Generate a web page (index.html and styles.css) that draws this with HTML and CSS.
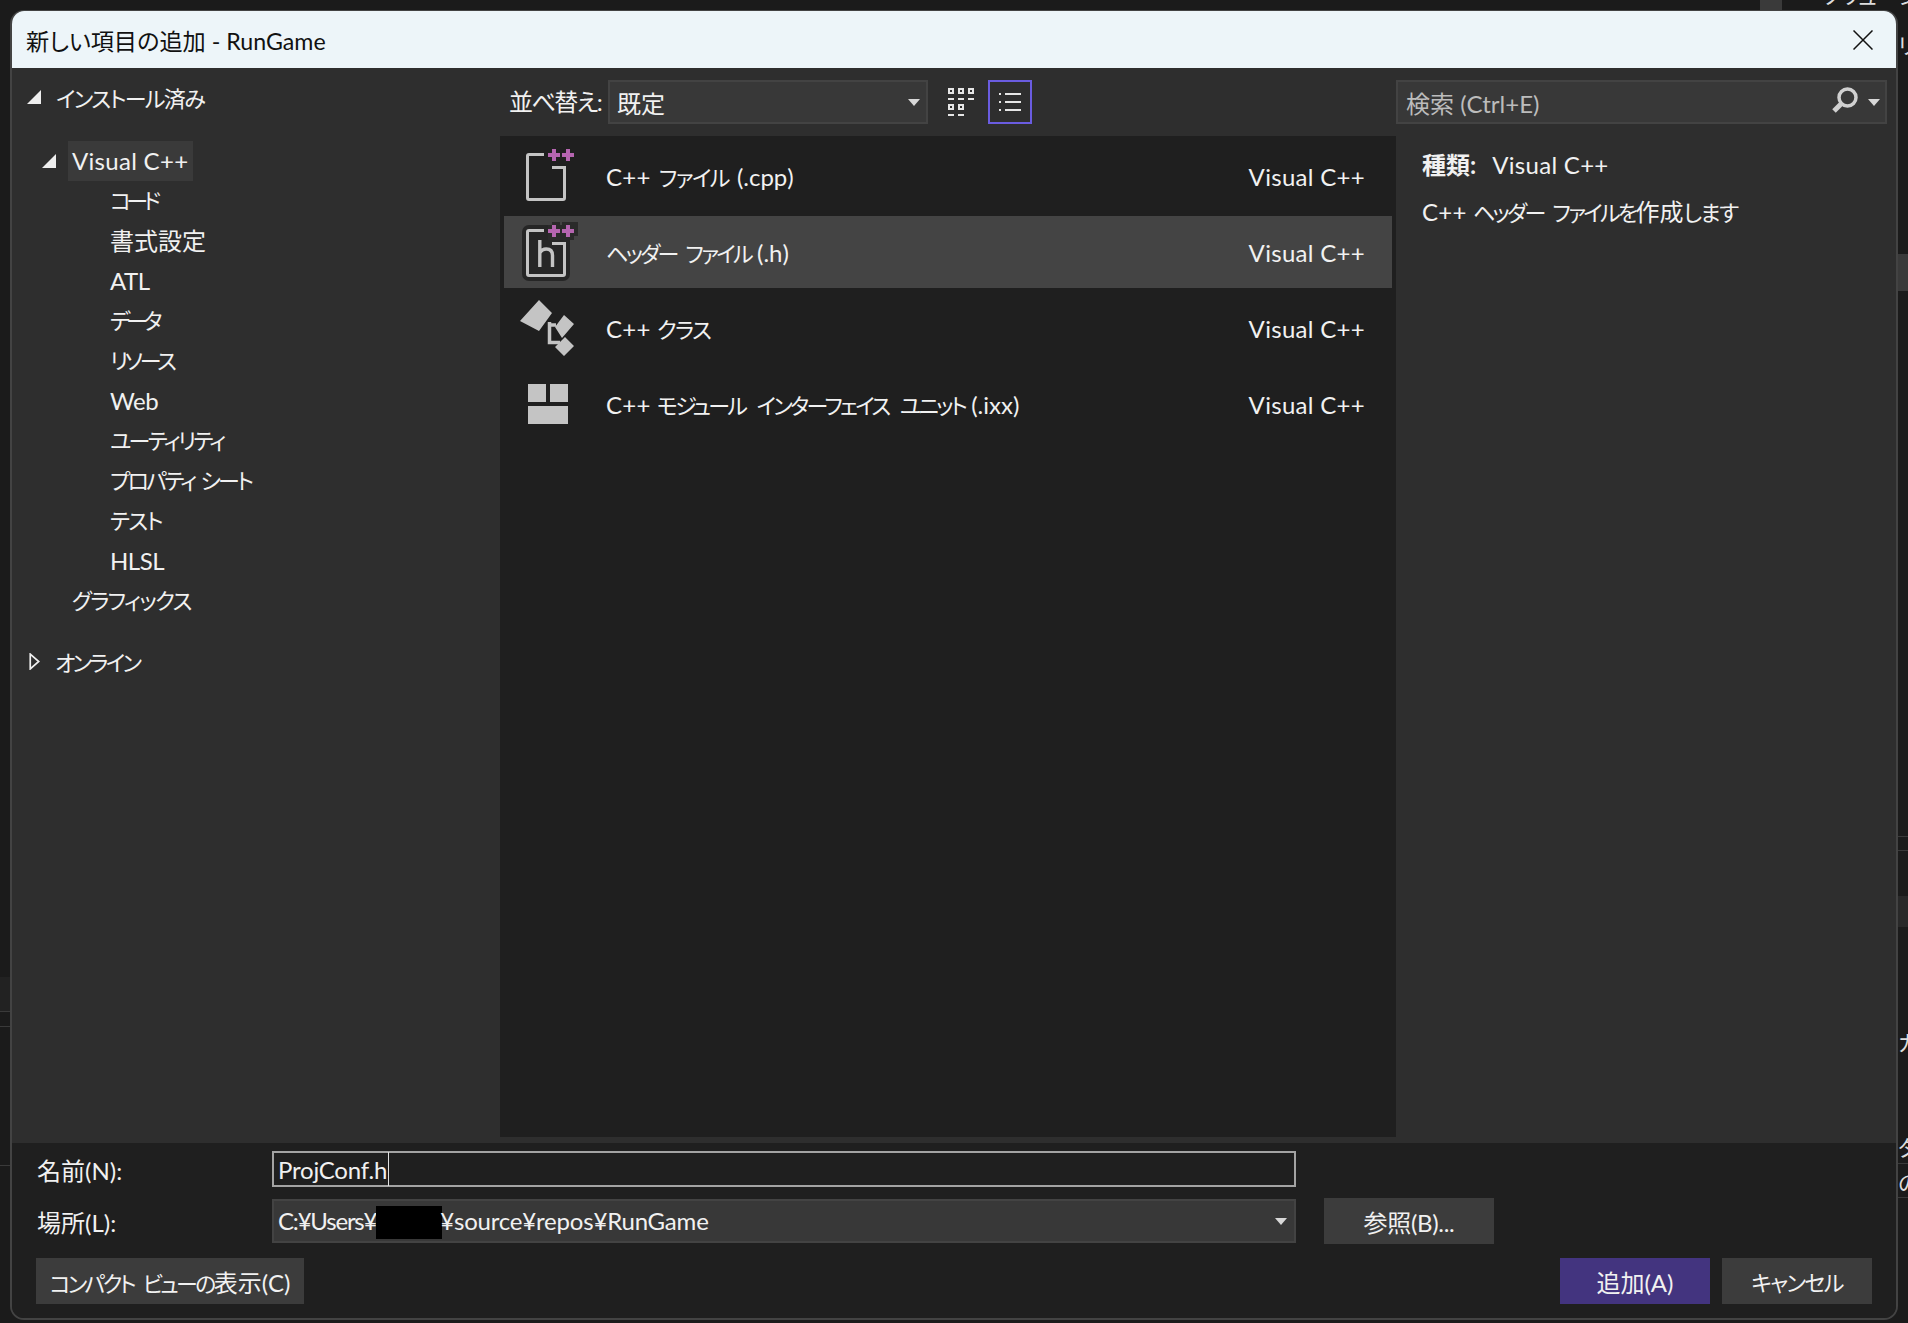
FILE: index.html
```html
<!DOCTYPE html>
<html lang="ja">
<head>
<meta charset="utf-8">
<title>新しい項目の追加 - RunGame</title>
<link rel="stylesheet" href="styles.css">
</head>
<body>
<div class="backdrop">
  <span class="bg-bit bit-top">ソリューション</span>
  <span class="bg-bit bit-r1">リ</span>
  <span class="bg-bit bit-r5">ー</span>
  <span class="bg-bit bit-r2">ガ</span>
  <span class="bg-bit bit-r3">タ</span>
  <span class="bg-bit bit-r4">の</span>
  <span class="bg-block bit-block1"></span>
  <span class="bg-block bit-block2"></span>
  <span class="bg-block bit-block3"></span>
  <span class="bg-block bit-block4"></span>
  <span class="bg-line bit-line1"></span>
  <span class="bg-line bit-line2"></span>
  <span class="bg-line bit-line3"></span>
  <span class="bg-line bit-line4"></span>
  <span class="bg-line bit-line5"></span>
  <span class="bg-line bit-line6"></span>
  <span class="bg-line bit-line7"></span>
</div>
<main class="dialog">
  <header class="titlebar">
    <span>新しい項目の追加 - RunGame</span>
    <svg class="close" viewBox="0 0 20 20"><path d="M0.5 0.5L19.5 19.5M19.5 0.5L0.500 19.5" stroke="#111" stroke-width="1.5" fill="none"/></svg>
  </header>
  <div class="content">
    <nav class="tree">
      <div class="tree-head"><i class="tri tri-open"></i><span class="k2">インストール済み</span></div>
      <div class="tree-sel-row"><i class="tri tri-open"></i><span class="tree-sel plus">Visual C++</span></div>
      <ul class="tree-children">
        <li class="k5">コード</li><li>書式設定</li><li class="lat">ATL</li><li class="k5">データ</li><li class="k4">リソース</li><li class="lat">Web</li><li class="k3">ユーティリティ</li><li class="k3 sp-narrow">プロパティ シート</li><li class="k2">テスト</li><li class="lat">HLSL</li>
      </ul>
      <div class="tree-gfx k2">グラフィックス</div>
      <div class="tree-online"><svg class="tri-closed" viewBox="0 0 10 16"><path d="M1 1L9 8L1 15Z" fill="none" stroke="#f0f0f0" stroke-width="1.6"/></svg><span class="k3">オンライン</span></div>
    </nav>
    <section class="center">
      <div class="toolbar">
        <span class="sort-label t1">並べ替え:</span>
        <div class="combo sort-combo"><span>既定</span><i class="caret"></i></div>
        <button class="view-btn" aria-label="grid">
          <svg viewBox="948 88 26 28" width="26" height="28" fill="#e6e6e6">
            <path fill-rule="evenodd" d="M948 88h6v6h-6zM950 90v2h2v-2zM958 88h6v6h-6zM960 90v2h2v-2zM968 88h6v6h-6zM970 90v2h2v-2zM948 104h6v6h-6zM950 106v2h2v-2zM958 104h6v6h-6zM960 106v2h2v-2z"/>
            <path d="M948 98h6v2h-6zM958 98h6v2h-6zM968 98h6v2h-6zM948 114h6v2h-6zM958 114h6v2h-6z"/>
          </svg>
        </button>
        <button class="view-btn view-on" aria-label="list">
          <svg viewBox="998 92 22 18" width="22" height="18" fill="#e6e6e6">
            <path d="M998 92h2v2h-2zM1004 92h16v2h-16zM998 100h2v2h-2zM1004 100h16v2h-16zM998 108h2v2h-2zM1004 108h16v2h-16z"/>
          </svg>
        </button>
      </div>
      <div class="list">
        <div class="row">
          <svg class="ico" viewBox="520 146 60 60"><path d="M544 154.500H529a1.500 1.500 0 0 0-1.500 1.500V198a1.500 1.500 0 0 0 1.500 1.500H563a1.500 1.500 0 0 0 1.500-1.500V167.500H552" fill="none" stroke="#c4c4c4" stroke-width="3"/><path d="M548 153h4v-4h4v4h4v4h-4v4h-4v-4h-4zM562 153h4v-4h4v4h4v4h-4v4h-4v-4h-4z" fill="#b565b0"/></svg>
          <span class="row-name wide"><span class="plus">C++</span> <span class="k2">ファイル</span> (.cpp)</span><span class="row-kind plus">Visual C++</span>
        </div>
        <div class="row row-sel">
          <svg class="ico" viewBox="520 222 60 60"><rect x="522" y="225" width="48" height="56" rx="7" fill="#262626"/><path d="M548 225h4v-4h8v4h2v-4h16v15h-4v4h-26z" fill="#2a2a2a"/><path d="M544 230.500H529a1.500 1.500 0 0 0-1.500 1.500V274a1.500 1.500 0 0 0 1.500 1.500H563a1.500 1.500 0 0 0 1.500-1.500V243.500H552" fill="none" stroke="#c4c4c4" stroke-width="3"/><path d="M539.800 240V267M539.800 253c1.500-3 4-4 6.500-4 4 0 6.200 2.300 6.200 6.500V267" fill="none" stroke="#c4c4c4" stroke-width="3.400"/><path d="M548 229h4v-4h4v4h4v4h-4v4h-4v-4h-4zM562 229h4v-4h4v4h4v4h-4v4h-4v-4h-4z" fill="#b565b0"/></svg>
          <span class="row-name"><span class="k3">ヘッダー ファイル</span> (.h)</span><span class="row-kind plus">Visual C++</span>
        </div>
        <div class="row">
          <svg class="ico" viewBox="520 298 60 60"><path d="M520 321L539 300L552 313L539 331ZM555 327L564 315L574 324L562 338ZM555 347L565 337L574 346L564 356Z" fill="#c4c4c4"/><path d="M549.500 322V342.500H560M549.500 325H556" fill="none" stroke="#c4c4c4" stroke-width="3.500"/></svg>
          <span class="row-name"><span class="plus">C++</span> <span class="k2">クラス</span></span><span class="row-kind plus">Visual C++</span>
        </div>
        <div class="row">
          <svg class="ico" viewBox="520 374 60 60"><path d="M528 384H546V402H528ZM550 384H568V402H550ZM528 406H568V424H528Z" fill="#c4c4c4"/></svg>
          <span class="row-name"><span class="plus">C++</span> <span class="k3 sp-wide">モジュール インターフェイス ユニット</span> (.ixx)</span><span class="row-kind plus">Visual C++</span>
        </div>
      </div>
    </section>
    <aside class="side">
      <div class="search"><span>検索 (Ctrl+E)</span>
        <svg class="search-ico" viewBox="1832 86 26 30"><circle cx="1847.500" cy="98.500" r="8.500" fill="none" stroke="#d0d0d0" stroke-width="3.500"/><path d="M1841 105L1834 112" stroke="#d0d0d0" stroke-width="5"/></svg>
        <i class="caret"></i>
      </div>
      <div class="info">
        <p class="info-kind"><b>種類:</b><span class="plus">Visual C++</span></p>
        <p class="info-desc"><span class="plus">C++</span> <span class="k3">ヘッダー ファイルを</span>作成<span class="k2">します</span></p>
      </div>
    </aside>
  </div>
  <footer class="footer">
    <div class="field-row">
      <label class="field-label">名前(N):</label>
      <div class="name-input"><span class="name-text">ProjConf.h</span><i class="text-caret"></i></div>
    </div>
    <div class="field-row loc-row">
      <label class="field-label">場所(L):</label>
      <div class="combo loc-combo"><span class="loc-text"><span class="loc-user">C:¥Users¥</span><i class="redact"></i>¥source¥repos¥RunGame</span><i class="caret"></i></div>
      <button class="btn btn-browse">参照(B)...</button>
    </div>
    <div class="actions">
      <button class="btn btn-compact"><span class="k3">コンパクト ビューの</span>表示(C)</button>
      <button class="btn btn-main primary">追加(A)</button>
      <button class="btn btn-main"><span class="k2">キャンセル</span></button>
    </div>
  </footer>
</main>
</body>
</html>
```

FILE: styles.css
```css
* { box-sizing: border-box; }
html, body { margin: 0; height: 100%; }
body {
  width: 1908px; height: 1323px; overflow: hidden; position: relative;
  background: #1b1b1b; color: #f1f1f1;
  font-family: "Lato", "Noto Sans CJK JP", sans-serif;
  font-feature-settings: "palt";
  font-size: 24px;
}
.t1 { letter-spacing: -1px; }
.k2, .k3, .k4, .k5 { font-size: 22px; }
.k2 { letter-spacing: -1.6px; }
.k3 { letter-spacing: -2.7px; word-spacing: 6px; }
.k4 { letter-spacing: -3.2px; }
.k5 { letter-spacing: -4.5px; }
.sp-narrow { word-spacing: 3px; }
.sp-wide { word-spacing: 8.500px; }
.wide { word-spacing: 2px; }
.lat { letter-spacing: -.5px; }
.plus { letter-spacing: .3px; }

.backdrop { position: absolute; inset: 0; }
.bg-bit { position: absolute; font-size: 22px; color: #ddd; left: 1898px; white-space: nowrap; }
.bit-top { left: 1822px; top: -22px; }
.bit-r1 { top: 28px; }
.bit-r5 { top: 900px; }
.bit-r2 { top: 1025px; }
.bit-r3 { top: 1130px; }
.bit-r4 { top: 1165px; }
.bg-block { position: absolute; background: #3a3a3a; }
.bit-block1 { left: 1760px; top: 0; width: 22px; height: 10px; }
.bit-block2 { left: 1898px; top: 254px; width: 10px; height: 37px; }
.bit-block3 { left: 1898px; top: 896px; width: 10px; height: 31px; background: #292929; }
.bit-block4 { left: 0; top: 977px; width: 10px; height: 34px; background: #222; }
.bg-line { position: absolute; height: 1px; width: 10px; background: #3a3a3a; }
.bit-line1 { left: 0; top: 1011px; }
.bit-line2 { left: 0; top: 1026px; }
.bit-line3 { left: 0; top: 1165px; }
.bit-line4 { left: 1898px; top: 836px; }
.bit-line5 { left: 1898px; top: 850px; }
.bit-line6 { left: 1898px; top: 1163px; }
.bit-line7 { left: 1898px; top: 1197px; }

.dialog {
  position: absolute; left: 10px; top: 10px; width: 1888px; height: 1310px;
  display: flex; flex-direction: column;
  border: 2px solid #434343; border-top-width: 1px; border-radius: 14px;
  overflow: hidden; background: #1f1f1f;
}
.titlebar {
  height: 57px; flex: none; background: #edf5f9; color: #111;
  display: flex; align-items: center; justify-content: space-between;
  padding: 0 23px 0 14px; font-size: 23.2px;
}
.close { width: 20px; height: 20px; }

.content { flex: none; height: 1075px; background: #2e2e2e; display: flex; }

.tree { width: 488px; flex: none; padding: 13px 0 0 15px; }
.tree-head, .tree-sel-row, .tree-online { display: flex; align-items: center; }
.tree-head { height: 32px; gap: 15px; }
.tri { display: block; width: 14px; height: 14px; background: #eee; clip-path: polygon(100% 0, 100% 100%, 0 100%); }
.tree-sel-row { margin: 28px 0 0 15px; height: 40px; gap: 12px; }
.tree-sel { background: #3a3a3a; padding: 0 4px; line-height: 40px; height: 40px; width: 125px; }
.tree-children { list-style: none; margin: 0; padding: 0 0 0 83px; }
.tree-children li, .tree-gfx { height: 40px; line-height: 40px; }
.tree-gfx { margin-left: 45px; }
.tree-online { margin-top: 24px; height: 32px; gap: 15px; margin-left: 2px; }
.tri-closed { width: 11px; height: 17px; }

.center { width: 896px; flex: none; display: flex; flex-direction: column; }
.toolbar { height: 68px; flex: none; display: flex; align-items: flex-start; padding: 12px 0 0 9px; }
.sort-label { line-height: 44px; width: 99px; letter-spacing: -1.6px; }
.combo {
  display: flex; align-items: center; justify-content: space-between;
  background: #383838; border: 2px solid #434343; height: 44px; padding: 0 6px 0 7px;
}
.sort-combo { width: 320px; }
.caret { display: block; width: 0; height: 0; border: 6px solid transparent; border-top: 7px solid #d8d8d8; border-bottom: 0; }
.view-btn { width: 44px; height: 44px; background: none; border: 2px solid transparent; padding: 0; display: flex; align-items: center; justify-content: center; }
.view-btn:not(.view-on) { margin-left: 11px; }
.view-on { border-color: #6a5ce0; margin-left: 5px; }

.list { flex: 1; background: #1f1f1f; padding: 4px 4px 0; margin-bottom: 6px; }
.row { height: 72px; margin-bottom: 4px; display: flex; align-items: center; padding: 0 27px 0 16px; }
.row-sel { background: #444; }
.ico { width: 60px; height: 60px; flex: none; }
.row-name { margin-left: 26px; flex: 1; }
.side { flex: 1; position: relative; }
.search {
  position: relative; margin: 12px 9px 0 0; height: 44px; background: #383838; border: 2px solid #434343;
  display: flex; align-items: center; padding: 0 8px; color: #bcbcbc;
}
.search-ico { position: absolute; right: 27px; top: 3px; width: 26px; height: 30px; }
.search .caret { position: absolute; right: 5px; top: 17px; }
.info { padding: 24px 0 0 26px; }
.info p { margin: 0; height: 47px; line-height: 34px; }
.info-kind > span { margin-left: 16px; }

.footer { flex: 1; background: #1f1f1f; padding: 8px 0 0 24px; position: relative; }
.field-row { display: flex; align-items: center; }
.field-label { width: 236px; padding-left: 1px; }
.name-input { width: 1024px; height: 36px; border: 2px solid #a3a3a3; display: flex; align-items: center; padding-left: 4px; }
.name-text { letter-spacing: -.2px; }
.text-caret { display: block; width: 1px; height: 34px; background: #e0e0e0; margin-left: 1px; }
.loc-row { margin-top: 12px; height: 44px; }
.loc-combo { width: 1024px; height: 44px; padding: 3px 7px 0 4px; }
.loc-combo .caret { margin-top: -3px; }
.loc-text { letter-spacing: -.2px; }
.loc-user { letter-spacing: -1.2px; }
.redact { display: inline-block; width: 66px; height: 33px; background: #000; vertical-align: -9px; margin-right: -2px; }
.btn { background: #3c3c3c; border: 0; color: #f1f1f1; font: inherit; font-feature-settings: "palt"; padding: 0; height: 46px; }
.btn-browse { width: 170px; margin-left: 28px; letter-spacing: -.3px; }
.actions { display: flex; margin-top: 15px; }
.btn-compact { width: 268px; margin-right: auto; }
.btn-main { width: 150px; margin-left: 12px; }
.btn-main:last-child { margin-right: 24px; }
.primary { background: #43347f; margin-left: 0; }
```
